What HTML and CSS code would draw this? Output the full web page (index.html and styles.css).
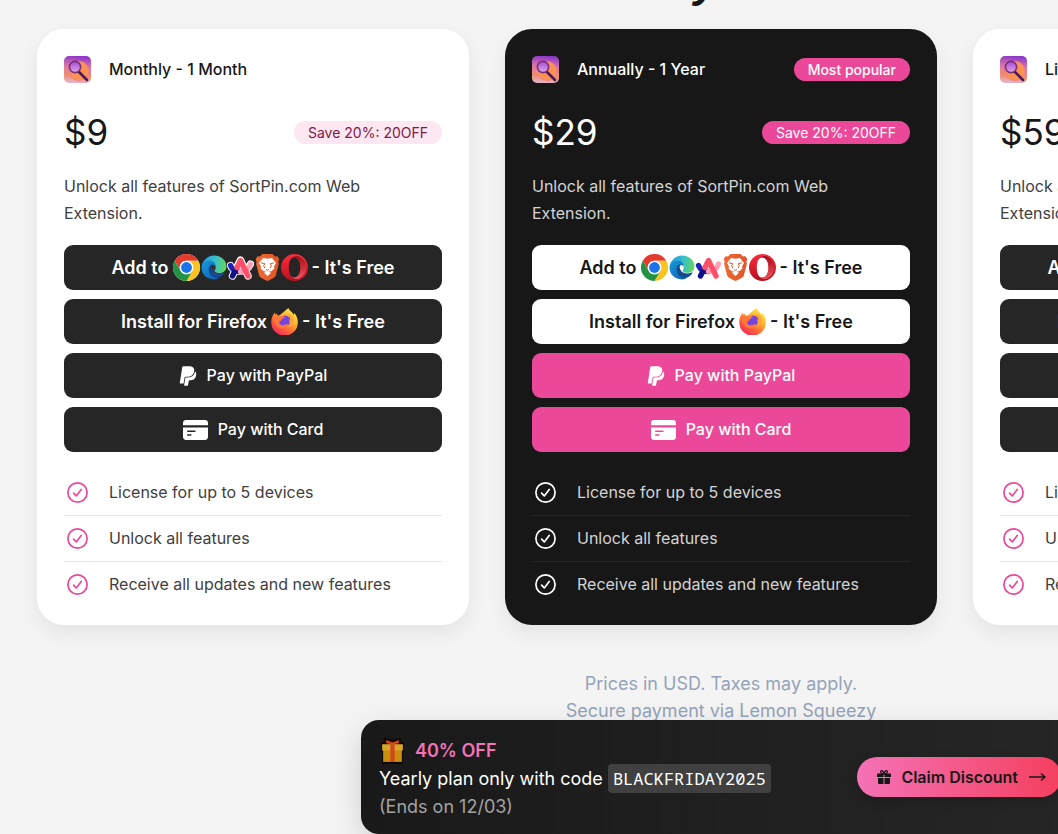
FILE: index.html
```html
<!DOCTYPE html>
<html lang="en">
<head>
<meta charset="utf-8">
<title>SortPin pricing</title>
<link rel="stylesheet" href="styles.css">
</head>
<body>
<svg class="defs" aria-hidden="true">
  <defs>
    <linearGradient id="g-app" x1=".5" y1="0" x2=".4" y2="1"><stop offset="0" stop-color="#8c36c8"/><stop offset=".4" stop-color="#dc78a5"/><stop offset=".75" stop-color="#f08d70"/><stop offset="1" stop-color="#dfb6cd"/></linearGradient>
    <radialGradient id="g-sun"><stop offset="0" stop-color="#ff8758"/><stop offset=".8" stop-color="#fb9550"/><stop offset="1" stop-color="#f47e82"/></radialGradient>
    <linearGradient id="g-lens" x1="0" y1="0" x2="0" y2="1"><stop offset="0" stop-color="#a64adc"/><stop offset="1" stop-color="#dfa5e2"/></linearGradient>
    <linearGradient id="g-edge" x1="0" y1=".3" x2="1" y2=".4"><stop offset="0" stop-color="#2496db"/><stop offset=".5" stop-color="#35bdd1"/><stop offset="1" stop-color="#62d75b"/></linearGradient>
    <linearGradient id="g-edge2" x1="0" y1="0" x2=".8" y2="1"><stop offset="0" stop-color="#159bd9"/><stop offset="1" stop-color="#1261b5"/></linearGradient>
    <linearGradient id="g-opera" x1="0" y1="0" x2="0" y2="1"><stop offset="0" stop-color="#ff2b3b"/><stop offset="1" stop-color="#b8101d"/></linearGradient>
    <linearGradient id="g-opera2" x1="0" y1="0" x2="0" y2="1"><stop offset="0" stop-color="#a40c17"/><stop offset="1" stop-color="#f4535e"/></linearGradient>
    <linearGradient id="g-fox" x1=".85" y1=".05" x2=".2" y2=".95"><stop offset="0" stop-color="#fff04a"/><stop offset=".35" stop-color="#ffb52e"/><stop offset=".65" stop-color="#ff6a36"/><stop offset="1" stop-color="#f0295e"/></linearGradient>
    <linearGradient id="g-brave" x1="0" y1="0" x2="1" y2="0"><stop offset="0" stop-color="#ef6a34"/><stop offset="1" stop-color="#df5528"/></linearGradient>
  </defs>
  <symbol id="app" viewBox="0 0 27 27">
    <rect width="27" height="27" rx="5" fill="url(#g-app)"/>
    <circle cx="15" cy="15" r="10" fill="url(#g-sun)"/>
    <path d="M14.5 15.5 23 24" stroke="#4b184f" stroke-width="2.6" stroke-linecap="round"/>
    <circle cx="11" cy="11" r="5.600" fill="url(#g-lens)" stroke="#753277" stroke-width="1.600"/>
  </symbol>
  <symbol id="chrome" viewBox="0 0 48 48">
    <circle cx="24" cy="24" r="24" fill="#fff"/>
    <path d="M3.2 12A24 24 0 0 1 44.800 12H24a12 12 0 0 0-10.400 18Z" fill="#e33b2e"/>
    <path d="M44.800 12A24 24 0 0 1 24 48L34.400 30A12 12 0 0 0 24 12Z" fill="#fcc31e"/>
    <path d="M24 48A24 24 0 0 1 3.200 12L13.600 30A12 12 0 0 0 34.400 30Z" fill="#229342"/>
    <circle cx="24" cy="24" r="12" fill="#fff"/><circle cx="24" cy="24" r="9.600" fill="#1a73e8"/>
  </symbol>
  <symbol id="edge" viewBox="1 2 25 25">
    <path d="M2.500 15.500A11.500 11.500 0 0 1 14 3.500C21 3.500 25.500 8.500 25.500 13.500c0 4-3 6-6.500 6-3 0-4.500-1-4.500-2 0-.7 1-1.300 1-3 0-3-3-5-6-5-4 0-6.300 2.500-7 6Z" fill="url(#g-edge)"/>
    <path d="M2.500 15c0-4.500 3.500-7 7.500-7 3.300 0 5.500 2.500 5.500 5-3-1.500-5.500 0-5.500 3.500 0 4.500 4.500 7.500 9 7.200-2 1.500-3.300 1.800-5 1.800-6.500 0-11.500-4.500-11.500-10.500Z" fill="url(#g-edge2)"/>
    <path d="M9 17c-.4-3 1.700-5.500 4-6-1 1-1.500 2.700-1 4.500 1 4 5.500 5.800 11 3.700.6-.2.900.3.600.7-1.500 2.500-4 4.300-7 4.300-4 0-7.200-3.500-7.600-7.200Z" fill="#16488f"/>
    <path d="M14.500 13.500c-1.500 1.500-1.500 4 .5 5.200 2.500 1.500 6.500 1 8.500-.7" fill="none" stroke="#fff" stroke-opacity=".25" stroke-width=".6"/>
  </symbol>
  <symbol id="arc" viewBox="0 0 27 27">
    <g fill="none" stroke-linecap="round" stroke-linejoin="round">
      <path d="M3.500 11.500c2 7 15 9 20-1.500M5.500 22 13.500 6l7.500 16" stroke="#fff" stroke-width="7.400"/>
      <path d="M3.500 11.500c1.500 3.500 5 6.500 10 6" stroke="#1e20bd" stroke-width="5.400"/>
      <path d="M5.500 22 8 17" stroke="#11108b" stroke-width="5.400"/>
      <path d="M13.500 17.500c5 0 8.500-3 10-7.500" stroke="#ff9fb4" stroke-width="5.200"/>
      <path d="M10 13.500 13.500 6.500 21 22" stroke="#ff5069" stroke-width="5.400"/>
    </g>
  </symbol>
  <symbol id="brave" viewBox="0 0 27 27">
    <path d="M8.500 0h10l2.500 2.500 2.500-.3 1.800 3-1 2.500.6 2-3 11.500c-.5 1.800-1.500 2.600-8.400 5.800-6.900-3.200-7.900-4-8.400-5.800l-3-11.500.6-2-1-2.500 1.800-3L6 2.500Z" fill="url(#g-brave)"/>
    <path d="M13.500 4.800 18 4l4 5-2 3.500.5 2-3.500 3-2-.7 1.800 2.200-3.300 3-3.300-3 1.800-2.200-2 .7-3.500-3 .5-2L5 9l4-5Z" fill="#fff"/>
    <path d="m7 8.800 4 1-1.400 1.600 1.200 2.800M20 8.800l-4 1 1.400 1.600-1.200 2.800M12 15.500l1.500.9 1.500-.9" fill="none" stroke="#e95d2c" stroke-width="1"/>
  </symbol>
  <symbol id="opera" viewBox="0 0 27 27">
    <path fill-rule="evenodd" d="M13.500 0a13.500 13.500 0 1 0 0 27 13.500 13.500 0 0 0 0-27Zm0 3.200c3.800 0 6 4.400 6 10.300s-2.200 10.300-6 10.300-5.700-4.400-5.700-10.300S9.700 3.200 13.500 3.200Z" fill="url(#g-opera)"/>
    <path d="M9.500 5.200C12 2 16 1 19.500 3.200a12 12 0 0 1 0 20.600c-3.500 2.200-7.500 1.200-10-2 4.500 4.200 10-.3 10-8.300s-5.500-12.500-10-8.300Z" fill="url(#g-opera2)"/>
  </symbol>
  <symbol id="firefox" viewBox="0 0 27 27">
    <path d="M17.500 0c.3 2 2.500 3.200 4.200 5.300l1.100 1.600.5-1.900c2.500 2.800 3.700 6 3.500 9.500A13.200 13.200 0 0 1 .3 14.500C.2 10.500 1.500 7 4 4.500L4.500 7 6 5.500l.7 2.200c3-.6 5-3.200 10.800-7.700Z" fill="url(#g-fox)"/>
    <circle cx="14" cy="13.500" r="6" fill="#7543df"/>
    <path d="M2 8c3-.5 4.500.5 6.500.5 2-.8 3.500-.8 5.500.4L11 11c-.5 2-3 2-3 4 1 2.500 4 3 6.500 1.600 1.500-.8 2.500-.7 3.200 0-2 4.800-9 5.500-12.500 1C3 15 2.500 11 2 8Z" fill="#ff7837"/>
    <path d="M14.500 6.700c2.500.3 4.500 2.300 5.200 5L18 11.500c1.500 3.500 0 6.500-3 8 5 0 8.500-4 7.500-9-.5-3-4-6-8-3.800Z" fill="#ffa436"/>
  </symbol>
  <symbol id="paypal" viewBox="0 0 384 512"><path fill="currentColor" d="M111.400 295.900c-3.500 19.200-17.400 108.700-21.500 134-.3 1.800-1 2.500-3 2.500H12.300c-7.600 0-13.100-6.600-12.100-13.900L58.800 46.600c1.500-9.600 10.100-16.900 20-16.900 152.300 0 165.100-3.700 204 11.400 60.100 23.300 65.600 79.500 44 140.300-21.500 62.600-72.500 89.500-140.100 90.300-43.400.7-69.500-7-75.300 24.200zM357.100 152c-1.800-1.300-2.500-1.800-3 1.300-2 11.400-5.100 22.500-8.800 33.600-39.900 113.800-150.500 103.900-204.500 103.900-6.100 0-10.100 3.300-10.900 9.400-22.600 140.400-27.100 169.700-27.100 169.700-1 7.100 3.500 12.900 10.600 12.900h63.500c8.600 0 15.700-6.300 17.400-14.900.7-5.400-1.100 6.100 14.400-91.300 4.600-22 14.300-19.700 29.300-19.700 71 0 126.400-28.800 142.900-112.300 6.500-34.800 4.600-71.400-23.800-92.600z"/></symbol>
  <symbol id="card" viewBox="0 0 24 19"><path fill="currentColor" fill-rule="evenodd" d="M0 5V3a3 3 0 0 1 3-3h18a3 3 0 0 1 3 3v2ZM0 7h24v9a3 3 0 0 1-3 3H3a3 3 0 0 1-3-3Zm4 3v1.500h8V10Zm0 3.500V15h4v-1.500Z"/></symbol>
  <symbol id="check" viewBox="0 0 27 27"><g fill="none" stroke="currentColor" stroke-linecap="round" stroke-linejoin="round"><circle cx="13.500" cy="13.500" r="9.600" stroke-width="1.700"/><path d="m9.600 14.200 2.700 2.700 4.900-6.400" stroke-width="1.700"/></g></symbol>
  <symbol id="present" viewBox="0 0 24 26">
    <path d="M2 5h4L5 1l7 2 7-2-1 4h4v8h-1v11H3V13H2Z" fill="#160d04" stroke="#0d0804" stroke-width="2"/>
    <path d="M3 11h18v12H3Z" fill="#c98f0c"/><path d="M2 6h20v6H2Z" fill="#d9a427"/>
    <path d="M10 6h4v17h-4Z" fill="#d34522"/><path d="M12 6 6 5V2l5 2h2l5-2v3Z" fill="#dc4823"/>
  </symbol>
  <symbol id="gift" viewBox="0 0 14 14"><path fill="currentColor" d="M1 3.500h12a1 1 0 0 1 1 1V7H7.500V4h-1v3H0V4.500a1 1 0 0 1 1-1ZM1 8h5.500v6H2a1 1 0 0 1-1-1Zm6.500 0H13v5a1 1 0 0 1-1 1H7.500Z"/><path d="M7 4C3 4 3 .7 4.700.7 6 .7 6.500 2 7 4c.5-2 1-3.300 2.300-3.300C11 .7 11 4 7 4Z" fill="none" stroke="currentColor" stroke-width="1.300"/></symbol>
  <symbol id="arrow" viewBox="0 0 18 10"><path d="M1 5h16M13 1.500 17 5l-4 3.500" fill="none" stroke="currentColor" stroke-width="1.400"/></symbol>
</svg>

<div class="page">
  <h1 class="title">y</h1>
  <main class="plans">
    <article class="plan">
      <header class="plan-head"><svg class="icon"><use href="#app"/></svg><h2>Monthly - 1 Month</h2></header>
      <div class="price-row"><span class="price">$9</span><span class="pill">Save 20%: 20OFF</span></div>
      <p class="desc">Unlock all features of SortPin.com Web Extension.</p>
      <div class="actions">
        <a class="btn" href="#chrome-store">Add to <span class="browsers"><svg class="icon"><use href="#chrome"/></svg><svg class="icon"><use href="#edge"/></svg><svg class="icon"><use href="#arc"/></svg><svg class="icon"><use href="#brave"/></svg><svg class="icon"><use href="#opera"/></svg></span> - It's Free</a>
        <a class="btn" href="#firefox-store">Install for Firefox <span class="browsers"><svg class="icon"><use href="#firefox"/></svg></span> - It's Free</a>
        <button class="btn pay"><svg class="i-paypal"><use href="#paypal"/></svg>Pay with PayPal</button>
        <button class="btn pay"><svg class="i-card"><use href="#card"/></svg>Pay with Card</button>
      </div>
      <ul class="features">
        <li><svg class="icon"><use href="#check"/></svg>License for up to 5 devices</li>
        <li><svg class="icon"><use href="#check"/></svg>Unlock all features</li>
        <li><svg class="icon"><use href="#check"/></svg>Receive all updates and new features</li>
      </ul>
    </article>

    <article class="plan dark">
      <header class="plan-head"><svg class="icon"><use href="#app"/></svg><h2>Annually - 1 Year</h2><span class="pill">Most popular</span></header>
      <div class="price-row"><span class="price">$29</span><span class="pill">Save 20%: 20OFF</span></div>
      <p class="desc">Unlock all features of SortPin.com Web Extension.</p>
      <div class="actions">
        <a class="btn" href="#chrome-store">Add to <span class="browsers"><svg class="icon"><use href="#chrome"/></svg><svg class="icon"><use href="#edge"/></svg><svg class="icon"><use href="#arc"/></svg><svg class="icon"><use href="#brave"/></svg><svg class="icon"><use href="#opera"/></svg></span> - It's Free</a>
        <a class="btn" href="#firefox-store">Install for Firefox <span class="browsers"><svg class="icon"><use href="#firefox"/></svg></span> - It's Free</a>
        <button class="btn pay"><svg class="i-paypal"><use href="#paypal"/></svg>Pay with PayPal</button>
        <button class="btn pay"><svg class="i-card"><use href="#card"/></svg>Pay with Card</button>
      </div>
      <ul class="features">
        <li><svg class="icon"><use href="#check"/></svg>License for up to 5 devices</li>
        <li><svg class="icon"><use href="#check"/></svg>Unlock all features</li>
        <li><svg class="icon"><use href="#check"/></svg>Receive all updates and new features</li>
      </ul>
    </article>

    <article class="plan">
      <header class="plan-head"><svg class="icon"><use href="#app"/></svg><h2>Lifetime</h2></header>
      <div class="price-row"><span class="price">$59</span><span class="pill">Save 20%: 20OFF</span></div>
      <p class="desc">Unlock all features of SortPin.com Web Extension.</p>
      <div class="actions">
        <a class="btn" href="#chrome-store">Add to <span class="browsers"><svg class="icon"><use href="#chrome"/></svg><svg class="icon"><use href="#edge"/></svg><svg class="icon"><use href="#arc"/></svg><svg class="icon"><use href="#brave"/></svg><svg class="icon"><use href="#opera"/></svg></span> - It's Free</a>
        <a class="btn" href="#firefox-store">Install for Firefox <span class="browsers"><svg class="icon"><use href="#firefox"/></svg></span> - It's Free</a>
        <button class="btn pay"><svg class="i-paypal"><use href="#paypal"/></svg>Pay with PayPal</button>
        <button class="btn pay"><svg class="i-card"><use href="#card"/></svg>Pay with Card</button>
      </div>
      <ul class="features">
        <li><svg class="icon"><use href="#check"/></svg>License for up to 5 devices</li>
        <li><svg class="icon"><use href="#check"/></svg>Unlock all features</li>
        <li><svg class="icon"><use href="#check"/></svg>Receive all updates and new features</li>
      </ul>
    </article>
  </main>
  <p class="note">Prices in USD. Taxes may apply.<br>Secure payment via Lemon Squeezy</p>

  <aside class="promo">
    <div class="promo-text">
      <div class="promo-title"><svg class="i-present"><use href="#present"/></svg>40% OFF</div>
      <div>Yearly plan only with code <code>BLACKFRIDAY2025</code></div>
      <div class="ends">(Ends on 12/03)</div>
    </div>
    <button class="claim"><svg class="i-gift"><use href="#gift"/></svg>Claim Discount<svg class="i-arrow"><use href="#arrow"/></svg></button>
  </aside>
</div>
</body>
</html>
```
FILE: styles.css
```css
* { box-sizing: border-box; margin: 0; padding: 0; }
html { overflow: hidden; }
body { background: #f4f4f4; color: #171717; font-family: Inter, sans-serif; font-size: 16px; line-height: 27px; }
svg { display: block; flex: none; }
button { border: 0; font: inherit; cursor: pointer; }
.defs { position: absolute; width: 0; height: 0; }

.page { position: relative; min-width: 1442px; min-height: 100vh; overflow: hidden; padding: 0 37px; }
.title { height: 47px; margin-top: -18px; padding-right: 30px; text-align: center; font: italic 700 44px/1 "Liberation Sans", sans-serif; line-height: 0; }

.plans { display: grid; grid-template-columns: repeat(3, 1fr); gap: 36px; }
.plan { padding: 27px 27px 18px; border-radius: 27px; background: #fff; box-shadow: 0 8px 20px rgba(0, 0, 0, .07); }
.plan-head { display: flex; align-items: center; gap: 18px; margin-bottom: 27px; }
.plan-head h2 { font-size: 16px; font-weight: 500; }
.plan-head .pill { margin-left: auto; font-weight: 500; }
.icon { width: 27px; height: 27px; }
.price-row { display: flex; align-items: center; justify-content: space-between; height: 45px; margin-bottom: 18px; }
.price { font-size: 35px; }
.pill { padding: 0 14px; border-radius: 12px; background: #fce7f3; color: #831843; font-size: 14px; line-height: 23px; }
.desc { margin-bottom: 18px; color: #404040; }

.actions { display: flex; flex-direction: column; gap: 9px; margin-bottom: 18px; }
.btn { display: flex; align-items: center; justify-content: center; gap: 4px; height: 45px; border-radius: 9px; background: #262626; color: #fff; font-size: 18px; font-weight: 600; text-decoration: none; }
.btn.pay { gap: 10px; font-size: 16px; font-weight: 500; }
.browsers { display: flex; }
.i-paypal { width: 18px; height: 22px; }
.i-card { width: 25px; height: 20px; }

.features { list-style: none; color: #404040; }
.features li { display: flex; align-items: center; gap: 18px; padding: 9px 0; }
.features li + li { border-top: 1px solid #e5e5e5; }
.features .icon { color: #ec4899; }

.dark { background: #171717; color: #fff; }
.dark .pill { background: #ec4899; color: #fff; }
.dark .desc, .dark .features { color: #d4d4d4; }
.dark .btn { background: #fff; color: #171717; }
.dark .btn.pay { background: #ec4899; color: #fff; }
.dark .features li + li { border-color: #262626; }
.dark .features .icon { color: #fff; }

.note { margin-top: 45px; text-align: center; color: #94a3b8; font-size: 18px; }

.promo { position: absolute; bottom: 0; left: 0; right: 0; display: flex; align-items: center; justify-content: space-between; width: 720px; height: 114px; margin: 0 auto; padding: 0 20px 0 18px; border-radius: 18px; background: linear-gradient(90deg, #191919, #262626); color: #fff; box-shadow: 0 10px 30px rgba(0, 0, 0, .15); font-size: 18px; line-height: 28px; }
.promo-text { padding-top: 4px; }
.promo-title { display: flex; align-items: center; gap: 9px; color: #f472b6; font-weight: 600; }
.i-present { width: 27px; height: 27px; }
.promo code { padding: 3px 5px; border-radius: 4px; background: #404040; font-family: "Noto Sans Mono", "DejaVu Sans Mono", monospace; font-size: 17px; line-height: 20px; }
.ends { color: #a3a3a3; }
.claim { display: flex; align-items: center; gap: 10px; height: 40px; padding: 0 15px 0 20px; border-radius: 20px; background: linear-gradient(90deg, #f472b6, #f43f5e); color: #171717; font-size: 16px; font-weight: 600; box-shadow: 0 4px 12px rgba(0, 0, 0, .2); }
.i-gift { width: 14px; height: 14px; }
.i-arrow { width: 18px; height: 10px; }
```
